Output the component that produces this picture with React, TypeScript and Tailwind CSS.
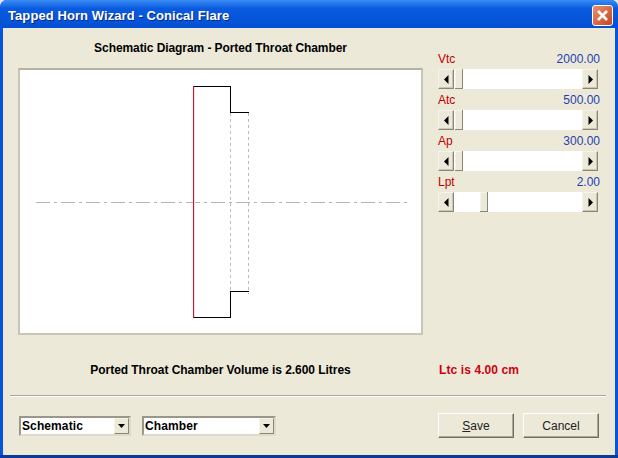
const font = "font-['Tahoma','Liberation_Sans',sans-serif]"

const sliders = [
  { label: 'Vtc', value: '2000.00', before: 0 },
  { label: 'Atc', value: '500.00', before: 0 },
  { label: 'Ap', value: '300.00', before: 0 },
  { label: 'Lpt', value: '2.00', before: 25 },
]

function ScrollButton({ dir }: { dir: 'left' | 'right' }) {
  return (
    <div className="w-[16px] h-[20px] shrink-0 flex items-center justify-center bg-[#ECE9D8] border border-l-[#f6f4ea] border-t-[#f6f4ea] border-r-[#8a8778] border-b-[#8a8778] shadow-[inset_-1px_-1px_0_#c9c6b5]">
      <svg width="5" height="9" viewBox="0 0 5 9">
        {dir === 'left' ? <path d="M4.5 0v9L0 4.5z" fill="#000" /> : <path d="M0.5 0v9L5 4.5z" fill="#000" />}
      </svg>
    </div>
  )
}

function Slider({ label, value, before }: { label: string; value: string; before: number }) {
  return (
    <div>
      <div className="flex justify-between h-[21px] pt-[4px] text-[12px] leading-[15px]">
        <span className="text-[#c00000]">{label}</span>
        <span className="text-[#1f3fb0]">{value}</span>
      </div>
      <div className="flex h-[20px] w-[160px] bg-white">
        <ScrollButton dir="left" />
        <div className="shrink-0" style={{ width: before + 1 }} />
        <div className="w-[8px] h-[20px] shrink-0 bg-[#ECE9D8] border-r border-b border-[#8a8778] shadow-[inset_1px_1px_0_#f6f4ea]" />
        <div className="flex-1" />
        <ScrollButton dir="right" />
      </div>
    </div>
  )
}

function Combo({ text, width }: { text: string; width: string }) {
  return (
    <div className={`${width} h-[20px] bg-white border-2 border-t-[#9a978a] border-l-[#9a978a] border-r-[#dedbcb] border-b-[#dedbcb] flex items-center justify-between pl-[1px]`}>
      <span className="text-[12px] font-bold tracking-[0.1px] text-black">{text}</span>
      <div className="w-[15px] h-[16px] flex items-center justify-center bg-[#ECE9D8] border border-l-[#f6f4ea] border-t-[#f6f4ea] border-r-[#8a8778] border-b-[#8a8778]">
        <svg width="7" height="4" viewBox="0 0 7 4"><path d="M0 0h7L3.5 4z" fill="#000" /></svg>
      </div>
    </div>
  )
}

function PushButton({ children }: { children: React.ReactNode }) {
  return (
    <button className="w-[76px] h-[25px] bg-[#ECE9D8] border border-l-white border-t-white border-r-[#716f64] border-b-[#716f64] shadow-[inset_-1px_-1px_0_#aca899] text-[12px] text-[#222]">
      {children}
    </button>
  )
}

function Diagram() {
  return (
    <svg width="400" height="261" viewBox="0 0 400 261" shapeRendering="crispEdges">
      <path d="M15 131.5H386" stroke="#b4b4b4" strokeDasharray="14 4 3 4" fill="none" />
      <path d="M209.5 42V223M227.5 42V223" stroke="#bcbcbc" strokeDasharray="3 3" fill="none" />
      <rect x="172" y="15" width="38" height="1" fill="#000" />
      <rect x="172" y="246" width="38" height="1" fill="#000" />
      <rect x="209" y="15" width="1" height="27" fill="#000" />
      <rect x="209" y="220" width="1" height="27" fill="#000" />
      <rect x="209" y="41" width="19" height="1" fill="#000" />
      <rect x="209" y="220" width="19" height="1" fill="#000" />
      {/* red back wall, with the pale fringe the reference has beside it */}
      <rect x="173" y="16" width="1" height="230" fill="#f8dcdc" />
      <rect x="172" y="15" width="1" height="232" fill="#d8102c" />
    </svg>
  )
}

export default function App() {
  return (
    <div className="w-[618px] h-[458px] bg-[#dfe6f2]">
      <div className={`w-full h-full flex flex-col overflow-hidden rounded-t-[7px] bg-[#0855DD] ${font}`}>
        {/* Title bar */}
        <div className="h-[28px] shrink-0 flex items-center justify-between pl-[8px] pr-[5px] bg-gradient-to-b from-[#3a8cf5] via-[#0A5BE0] via-30% to-[#0450D4]">
          <span className="mt-[3px] text-white font-bold text-[13px] tracking-[0.08px] [text-shadow:1px_1px_0_#0a2a80]">Tapped Horn Wizard - Conical Flare</span>
          <div className="w-[21px] h-[21px] mt-[3px] rounded-[3px] border border-white bg-gradient-to-br from-[#e8906f] to-[#c8401c] flex items-center justify-center">
            <svg width="13" height="13" viewBox="0 0 13 13"><path d="M2 2l9 9M11 2l-9 9" stroke="#fff" strokeWidth="2.6" /></svg>
          </div>
        </div>

        {/* Client area */}
        <div className="flex-1 mx-[3px] bg-[#ECE9D8] flex flex-col">
          <div className="flex pl-[15px] pt-[12px]">
            <div className="w-[405px]">
              <div className="h-[17px] leading-[17px] text-center text-[12px] font-bold tracking-[-0.08px] text-black">Schematic Diagram - Ported Throat Chamber</div>
              <div className="mt-[11px] w-[405px] h-[267px] bg-white border-[2px] border-t-[#b5b2a4] border-l-[#c9c6b8] border-r-[#c9c6b8] border-b-[#c9c6b8] pl-[1px] pt-[1px]">
                <Diagram />
              </div>
            </div>
            <div className="ml-[15px] w-[162px] flex flex-col pt-[8px]">
              {sliders.map(s => <Slider key={s.label} {...s} />)}
            </div>
          </div>

          <div className="flex h-[17px] mt-[27px] text-[12px] font-bold leading-[17px] pl-[15px]">
            <span className="w-[405px] text-center text-black tracking-[-0.05px]">Ported Throat Chamber Volume is 2.600 Litres</span>
            <span className="ml-[16px] tracking-[0.1px] text-[#d00010]">Ltc is 4.00 cm</span>
          </div>

          <div className="mt-[16px] ml-[7px] mr-[9px] border-t border-t-[#aca899] border-b border-b-white" />

          <div className="flex items-center mt-[16px] pl-[16px] pr-[16px]">
            <Combo text="Schematic" width="w-[112px]" />
            <div className="w-[11px]" />
            <Combo text="Chamber" width="w-[134px]" />
            <div className="flex-1" />
            <PushButton><span className="underline">S</span>ave</PushButton>
            <div className="w-[9px]" />
            <PushButton>Cancel</PushButton>
          </div>
        </div>
        <div className="h-[3px] shrink-0 bg-[#0a3a9c]" />
      </div>
    </div>
  )
}
